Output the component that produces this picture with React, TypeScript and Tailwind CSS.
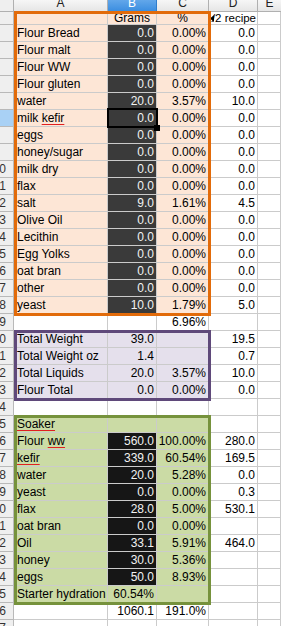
import type { ReactNode } from 'react';

type Row = {
    n: number;
    a?: ReactNode;
    b?: string;
    c?: string;
    d?: ReactNode;
    dark?: boolean;
};

const grid = 'border-r border-b border-[#cbcbcb]';

// spell-check mark under words the sheet doesn't know
const squiggle = 'underline decoration-[#e02020] decoration-1 underline-offset-[2px]';

const orangeRows: Row[] = [
    { n: 2, a: 'Flour Bread', b: '0.0', c: '0.00%', d: '0.0', dark: true },
    { n: 3, a: 'Flour malt', b: '0.0', c: '0.00%', d: '0.0', dark: true },
    { n: 4, a: 'Flour WW', b: '0.0', c: '0.00%', d: '0.0', dark: true },
    { n: 5, a: 'Flour gluten', b: '0.0', c: '0.00%', d: '0.0', dark: true },
    { n: 6, a: 'water', b: '20.0', c: '3.57%', d: '10.0', dark: true },
    { n: 7, a: <>milk <span className={squiggle}>kefir</span></>, b: '0.0', c: '0.00%', d: '0.0', dark: true },
    { n: 8, a: 'eggs', b: '0.0', c: '0.00%', d: '0.0', dark: true },
    { n: 9, a: 'honey/sugar', b: '0.0', c: '0.00%', d: '0.0', dark: true },
    { n: 10, a: 'milk dry', b: '0.0', c: '0.00%', d: '0.0', dark: true },
    { n: 11, a: 'flax', b: '0.0', c: '0.00%', d: '0.0', dark: true },
    { n: 12, a: 'salt', b: '9.0', c: '1.61%', d: '4.5', dark: true },
    { n: 13, a: 'Olive Oil', b: '0.0', c: '0.00%', d: '0.0', dark: true },
    { n: 14, a: 'Lecithin', b: '0.0', c: '0.00%', d: '0.0', dark: true },
    { n: 15, a: 'Egg Yolks', b: '0.0', c: '0.00%', d: '0.0', dark: true },
    { n: 16, a: 'oat bran', b: '0.0', c: '0.00%', d: '0.0', dark: true },
    { n: 17, a: 'other', b: '0.0', c: '0.00%', d: '0.0', dark: true },
    { n: 18, a: 'yeast', b: '10.0', c: '1.79%', d: '5.0', dark: true },
];

const purpleRows: Row[] = [
    { n: 20, a: 'Total Weight', b: '39.0', c: '', d: '19.5' },
    { n: 21, a: 'Total Weight oz', b: '1.4', c: '', d: '0.7' },
    { n: 22, a: 'Total Liquids', b: '20.0', c: '3.57%', d: '10.0' },
    { n: 23, a: 'Flour Total', b: '0.0', c: '0.00%', d: '0.0' },
];

const greenRows: Row[] = [
    { n: 25, a: <span className={squiggle}>Soaker</span> },
    { n: 26, a: <>Flour <span className={squiggle}>ww</span></>, b: '560.0', c: '100.00%', d: '280.0', dark: true },
    { n: 27, a: <span className={squiggle}>kefir</span>, b: '339.0', c: '60.54%', d: '169.5', dark: true },
    { n: 28, a: 'water', b: '20.0', c: '5.28%', d: '0.0', dark: true },
    { n: 29, a: 'yeast', b: '0.0', c: '0.00%', d: '0.3', dark: true },
    { n: 30, a: 'flax', b: '28.0', c: '5.00%', d: '530.1', dark: true },
    { n: 31, a: 'oat bran', b: '0.0', c: '0.00%', d: '', dark: true },
    { n: 32, a: 'Oil', b: '33.1', c: '5.91%', d: '464.0', dark: true },
    { n: 33, a: 'honey', b: '30.0', c: '5.36%', d: '', dark: true },
    { n: 34, a: 'eggs', b: '50.0', c: '8.93%', d: '', dark: true },
    { n: 35, a: 'Starter hydration', b: '60.54%', c: '' },
];

function RowHead({ n, active }: { n: number; active?: boolean }) {
    return (
        <div
            className={`w-[14px] shrink-0 flex justify-end overflow-hidden whitespace-nowrap pr-[7px] border-r border-b border-[#b9b9b9] text-[#333] ${
                active ? 'bg-[#a9d1f5]' : 'bg-[#efefef]'
            }`}
        >
            {n >= 10 ? n : ''}
        </div>
    );
}

function SheetRow({
    row,
    bg,
    darkBg,
    selected,
}: {
    row: Row;
    bg: string;
    darkBg: string;
    selected?: boolean;
}) {
    const bCls = row.dark ? `${darkBg} text-[#f2f2f2]` : bg;
    return (
        <div className="flex h-[17px] leading-[16px]">
            <RowHead n={row.n} active={selected} />
            <div className={`w-[94px] shrink-0 ${grid} ${bg} pl-[3px] whitespace-nowrap`}>{row.a}</div>
            <div className={`relative w-[49px] shrink-0 ${grid} ${bCls} flex justify-end pr-[2px]`}>
                {row.b}
                {selected && (
                    <>
                        <div className="absolute -left-[1px] -top-[2px] right-[-2px] bottom-[-2px] border-2 border-black z-20" />
                        <div className="absolute right-[-4px] bottom-[-5px] w-[6px] h-[6px] bg-black z-20" />
                    </>
                )}
            </div>
            <div className={`w-[52px] shrink-0 ${grid} ${bg} flex justify-end pr-[2px]`}>{row.c}</div>
            <div className={`w-[49px] shrink-0 ${grid} bg-white flex justify-end pr-[2px] whitespace-nowrap overflow-hidden`}>
                {row.d}
            </div>
            <div className={`flex-1 ${grid} bg-white`} />
        </div>
    );
}

function PlainRow({ n, b, c, d }: { n: number; b?: string; c?: string; d?: string }) {
    return (
        <div className="flex h-[17px] leading-[16px]">
            <RowHead n={n} />
            <div className={`w-[94px] shrink-0 ${grid} bg-white`} />
            <div className={`w-[49px] shrink-0 ${grid} bg-white flex justify-end pr-[2px]`}>{b}</div>
            <div className={`w-[52px] shrink-0 ${grid} bg-white flex justify-end pr-[2px]`}>{c}</div>
            <div className={`w-[49px] shrink-0 ${grid} bg-white flex justify-end pr-[2px]`}>{d}</div>
            <div className={`flex-1 ${grid} bg-white`} />
        </div>
    );
}

function Frame({ color }: { color: string }) {
    return <div className={`absolute left-[14px] w-[197px] top-[-1px] bottom-[-2px] border-[3px] ${color} z-10 pointer-events-none`} />;
}

function ColHeader() {
    const cols = [
        { label: 'A', w: 'w-[94px]' },
        { label: 'B', w: 'w-[49px]', active: true },
        { label: 'C', w: 'w-[52px]' },
        { label: 'D', w: 'w-[49px]' },
    ];
    return (
        <div className="flex h-[12px] overflow-hidden text-[12px] leading-[12px]">
            <div className="w-[14px] shrink-0 bg-[#efefef] border-r border-b border-[#b0b0b0]" />
            {cols.map((c) => (
                <div
                    key={c.label}
                    className={`${c.w} shrink-0 border-r border-b flex justify-center ${
                        c.active
                            ? 'bg-gradient-to-b from-[#62a7ea] to-[#3b8ee0] text-white border-[#2f7dcc]'
                            : 'bg-gradient-to-b from-[#f6f6f6] to-[#e6e6e6] text-[#222] border-[#b0b0b0]'
                    }`}
                >
                    <span className="-mt-[3px]">{c.label}</span>
                </div>
            ))}
            <div className="flex-1 bg-gradient-to-b from-[#f6f6f6] to-[#e6e6e6] border-b border-[#b0b0b0] flex justify-center text-[#222]">
                <span className="-mt-[3px]">E</span>
            </div>
        </div>
    );
}

export default function App() {
    const peach = 'bg-[#fde6d6]';
    const lav = 'bg-[#e5e0ec]';
    const green = 'bg-[#cbdba5]';

    return (
        <div className="w-[281px] h-[626px] overflow-hidden bg-white font-['Liberation_Sans',Arial,sans-serif] text-[12px] text-black">
            <ColHeader />

            {/* orange block */}
            <div className="relative">
                <Frame color="border-[#e26b0a]" />
                <div className="flex h-[13px] leading-[12px]">
                    <RowHead n={1} />
                    <div className={`w-[94px] shrink-0 ${grid} ${peach}`} />
                    <div className={`w-[49px] shrink-0 ${grid} ${peach} flex justify-center`}>Grams</div>
                    <div className={`w-[52px] shrink-0 ${grid} ${peach} flex justify-center`}>%</div>
                    <div className={`relative w-[49px] shrink-0 ${grid} bg-white flex justify-end overflow-hidden whitespace-nowrap pr-[1px] text-[11.5px]`}>
                        <span>1/2 recipe</span>
                        <svg width="4" height="7" viewBox="0 0 4 7" className="absolute left-[1px] top-[3px]">
                            <path d="M4 0 L0 3.5 L4 7 Z" fill="#000" />
                        </svg>
                    </div>
                    <div className={`flex-1 ${grid} bg-white`} />
                </div>
                {orangeRows.map((r) => (
                    <SheetRow key={r.n} row={r} bg={peach} darkBg="bg-[#3a3a3a]" selected={r.n === 7} />
                ))}
            </div>

            <PlainRow n={19} c="6.96%" />

            {/* purple block */}
            <div className="relative">
                <Frame color="border-[#5f497a]" />
                {purpleRows.map((r) => (
                    <SheetRow key={r.n} row={r} bg={lav} darkBg="bg-[#3a3a3a]" />
                ))}
            </div>

            <PlainRow n={24} />

            {/* green block */}
            <div className="relative">
                <Frame color="border-[#76923c]" />
                {greenRows.map((r) => (
                    <SheetRow key={r.n} row={r} bg={green} darkBg="bg-[#161616]" />
                ))}
            </div>

            <PlainRow n={36} b="1060.1" c="191.0%" />
            <PlainRow n={37} />
        </div>
    );
}
